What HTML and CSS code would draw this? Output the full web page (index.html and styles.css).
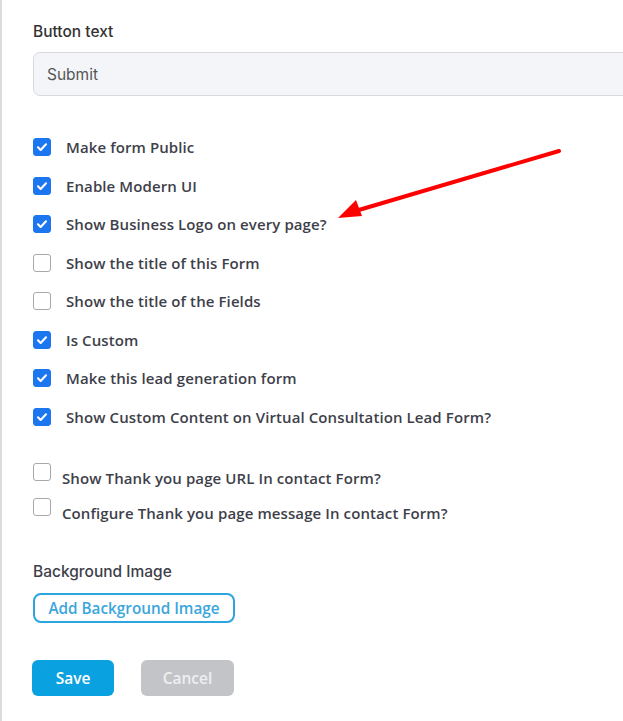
FILE: index.html
```html
<!DOCTYPE html>
<html>
<head>
<meta charset="utf-8">
<link rel="stylesheet" href="styles.css">
</head>
<body>
<div class="panel">
  <div class="field">
    <label class="field-label">Button text</label>
    <div class="input">Submit</div>
  </div>

  <ul class="checks">
    <li class="check"><span class="box on"><svg viewBox="0 0 18 18"><path d="M4.5 9.3l3 3 6-6.3"/></svg></span><span>Make form Public</span></li>
    <li class="check"><span class="box on"><svg viewBox="0 0 18 18"><path d="M4.5 9.3l3 3 6-6.3"/></svg></span><span>Enable Modern UI</span></li>
    <li class="check"><span class="box on"><svg viewBox="0 0 18 18"><path d="M4.5 9.3l3 3 6-6.3"/></svg></span><span>Show Business Logo on every page?</span></li>
    <li class="check"><span class="box"></span><span>Show the title of this Form</span></li>
    <li class="check"><span class="box"></span><span>Show the title of the Fields</span></li>
    <li class="check"><span class="box on"><svg viewBox="0 0 18 18"><path d="M4.5 9.3l3 3 6-6.3"/></svg></span><span>Is Custom</span></li>
    <li class="check"><span class="box on"><svg viewBox="0 0 18 18"><path d="M4.5 9.3l3 3 6-6.3"/></svg></span><span>Make this lead generation form</span></li>
    <li class="check"><span class="box on"><svg viewBox="0 0 18 18"><path d="M4.5 9.3l3 3 6-6.3"/></svg></span><span>Show Custom Content on Virtual Consultation Lead Form?</span></li>
  </ul>

  <ul class="checks small">
    <li class="check alt"><span class="box"></span><span>Show Thank you page URL In contact Form?</span></li>
    <li class="check alt"><span class="box"></span><span>Configure Thank you page message In contact Form?</span></li>
  </ul>

  <div class="bg-field">
    <div class="bg-label">Background Image</div>
    <button class="btn-outline">Add Background Image</button>
  </div>

  <div class="actions">
    <button class="btn-save">Save</button>
    <button class="btn-cancel">Cancel</button>
  </div>

  <svg class="arrow" width="623" height="721" viewBox="0 0 623 721">
    <line x1="559" y1="151" x2="352" y2="212" stroke="#f00" stroke-width="4" stroke-linecap="round"/>
    <polygon points="338,218 356,200 362,216" fill="#f00"/>
  </svg>
</div>
</body>
</html>
```

FILE: styles.css
```css
* { box-sizing: border-box; }
html, body { margin: 0; padding: 0; background: #fff; }
body { width: 623px; height: 721px; overflow: hidden; }

.panel {
  position: relative;
  height: 721px;
  border-left: 2px solid #dcdcdc;
  padding: 22px 0 0 31px;
  font-family: "Open Sans", "Liberation Sans", sans-serif;
}

.field-label {
  display: block;
  font-family: "Inter", "Liberation Sans", sans-serif;
  font-size: 15.5px;
  font-weight: 500;
  color: #333;
  line-height: 20px;
}

.input {
  margin-top: 10px;
  width: 620px;
  height: 44px;
  background: #f4f5f8;
  border: 1px solid #d9d9d9;
  border-radius: 7px;
  padding: 0 0 0 13px;
  display: flex;
  align-items: center;
  font-family: "Inter", "Liberation Sans", sans-serif;
  font-size: 15.5px;
  color: #555;
}

.checks {
  list-style: none;
  margin: 0;
  padding: 0;
}
.checks:first-of-type { margin-top: 32px; }

.check {
  display: flex;
  align-items: center;
  height: 38.5px;
  gap: 15px;
  font-size: 15px;
  font-weight: 600;
  color: #3e3f4a;
  letter-spacing: 0.1px;
}

.box {
  width: 18px;
  height: 18px;
  flex: none;
  border: 1.5px solid #a9a9a9;
  border-radius: 3px;
  background: #fff;
  display: flex;
  align-items: center;
  justify-content: center;
}
.box.on {
  background: #1c76ef;
  border-color: #1c76ef;
}
.box svg { width: 18px; height: 18px; }
.box path {
  fill: none;
  stroke: #fff;
  stroke-width: 2.4;
  stroke-linecap: round;
  stroke-linejoin: round;
}

.checks.small { margin-top: 27px; }
.check.alt {
  height: 35px;
  gap: 11px;
  align-items: flex-start;
}
.check.alt span:last-child { margin-top: 5px; }

.bg-field { margin-top: 29px; }
.bg-label {
  font-family: "Inter", "Liberation Sans", sans-serif;
  font-size: 15.5px;
  font-weight: 500;
  color: #3e3f4a;
  line-height: 20px;
}
.btn-outline {
  margin-top: 11px;
  width: 202px;
  height: 30px;
  border: 2px solid #2ba4e0;
  border-radius: 8px;
  background: #fff;
  color: #3ba6dc;
  font-family: "Open Sans", "Liberation Sans", sans-serif;
  font-size: 15.3px;
  font-weight: 600;
  padding: 0;
}

.actions {
  margin-top: 37px;
  display: flex;
  gap: 27px;
}
.btn-save, .btn-cancel {
  height: 36px;
  border: none;
  border-radius: 6px;
  font-family: "Open Sans", "Liberation Sans", sans-serif;
  font-size: 15.5px;
  font-weight: 600;
  color: #fff;
  padding: 0;
}
.btn-save { width: 82px; background: #0aa1e0; margin-left: -1px; }
.btn-cancel { width: 93px; background: #c3c4c7; color: #eeeff1; }

.arrow {
  position: absolute;
  left: -2px;
  top: 0;
  pointer-events: none;
}
```
